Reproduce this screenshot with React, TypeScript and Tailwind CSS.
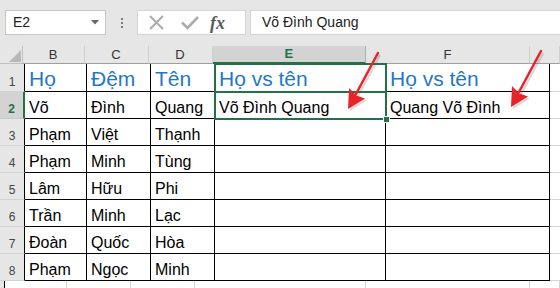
import React from 'react';

const COLS = [
  { key: 'A', w: 25 },
  { key: 'B', w: 62 },
  { key: 'C', w: 64 },
  { key: 'D', w: 64 },
  { key: 'E', w: 171 },
  { key: 'F', w: 164 },
  { key: 'G', w: 30 },
];

const HEAD = ['Họ', 'Đệm', 'Tên', 'Họ vs tên', 'Họ vs tên'];

const ROWS: string[][] = [
  ['Võ', 'Đình', 'Quang', 'Võ Đình Quang', 'Quang Võ Đình'],
  ['Phạm', 'Việt', 'Thạnh', '', ''],
  ['Phạm', 'Minh', 'Tùng', '', ''],
  ['Lâm', 'Hữu', 'Phi', '', ''],
  ['Trần', 'Minh', 'Lạc', '', ''],
  ['Đoàn', 'Quốc', 'Hòa', '', ''],
  ['Phạm', 'Ngọc', 'Minh', '', ''],
];

function Arrow({ dx, dy }: { dx: number; dy: number }) {
  // tail (378,53) -> tip (348,109)
  return (
    <g transform={`translate(${dx} ${dy})`}>
      <g transform="translate(2 2)" opacity="0.22">
        <line x1="378" y1="53" x2="356" y2="94" stroke="#555" strokeWidth="2.5" />
        <polygon points="348,109 365,98.5 356.5,95.5 349,88" fill="#555" />
      </g>
      <line x1="378" y1="53" x2="356" y2="94" stroke="#e8232a" strokeWidth="2.5" strokeLinecap="round" />
      <polygon points="348,109 365,98.5 356.5,95.5 349,88" fill="#e8232a" />
    </g>
  );
}

function Toolbar() {
  return (
    <div className="flex h-[46px] items-start bg-[#e6e6e6] pl-[5px] pt-[10px]">
      <div className="flex h-[25px] w-[101px] items-center justify-between border border-[#c6c6c6] bg-white pl-[7px] pr-[6px] text-[14px] text-[#222]">
        <span>E2</span>
        <svg width="8" height="5" viewBox="0 0 8 5">
          <polygon points="0,0 8,0 4,4.5" fill="#666" />
        </svg>
      </div>
      <div className="flex h-[25px] w-[31px] flex-col items-center justify-center gap-[2px]">
        <span className="h-[2px] w-[2px] bg-[#7a7a7a]" />
        <span className="h-[2px] w-[2px] bg-[#7a7a7a]" />
        <span className="h-[2px] w-[2px] bg-[#7a7a7a]" />
      </div>
      <div className="flex h-[25px] w-[109px] items-center border border-[#d4d4d4] bg-white">
        <svg width="15" height="15" viewBox="0 0 15 15" className="ml-[11px]">
          <path d="M1 1 L14 14 M14 1 L1 14" stroke="#ababab" strokeWidth="2" />
        </svg>
        <svg width="18" height="15" viewBox="0 0 18 15" className="ml-[17px]">
          <path d="M1 7.5 L6.5 13 L17 2" stroke="#ababab" strokeWidth="2.6" fill="none" />
        </svg>
        <span className="ml-[11px] font-['Liberation_Serif'] text-[18px] font-bold italic leading-none text-[#5a5a5a]">
          fx
        </span>
      </div>
      <div className="ml-[4px] flex h-[25px] flex-1 items-center border border-r-0 border-[#d4d4d4] bg-white pl-[11px] text-[14px] text-[#222]">
        Võ Đình Quang
      </div>
    </div>
  );
}

function HeaderRow() {
  return (
    <div className="flex h-[18px]">
      <div className="relative box-border w-[25px] border-r border-b border-[#c0c0c0] bg-[#e6e6e6]">
        <svg width="25" height="18" viewBox="0 0 25 18" className="absolute left-0 top-0">
          <polygon points="9,16 21,16 21,4" fill="#b8b8b8" />
        </svg>
      </div>
      {COLS.slice(1).map((c) =>
        c.key === 'E' ? (
          <div
            key={c.key}
            style={{ width: c.w }}
            className="box-border flex items-center justify-center border-b-2 border-r border-b-[#217346] border-r-[#b0b0b0] bg-[#d3d3d3] text-[13px] font-bold text-[#217346]"
          >
            {c.key}
          </div>
        ) : (
          <div
            key={c.key}
            style={{ width: c.w }}
            className="box-border flex shrink-0 items-center justify-center border-r border-b border-r-[#cfcfcf] border-b-[#9e9e9e] bg-[#e6e6e6] text-[13px] text-[#333]"
          >
            {c.key === 'G' ? '' : c.key}
          </div>
        )
      )}
    </div>
  );
}

function Row({ n, cells, head }: { n: number; cells: string[]; head?: boolean }) {
  const sel = n === 2;
  return (
    <div className={`flex ${n === 1 ? 'h-[28px]' : 'h-[27px]'}`}>
      <div
        className={`box-border flex w-[25px] shrink-0 items-end justify-center border-b pb-[3px] text-[12px] leading-none ${
          sel
            ? 'border-r-2 border-b-[#c8c8c8] border-r-[#217346] bg-[#d3d3d3] font-bold text-[#217346]'
            : 'border-r border-b-[#d2d2d2] border-r-black bg-[#e6e6e6] text-[#444]'
        }`}
      >
        {n}
      </div>
      {cells.map((t, i) => (
        <div
          key={i}
          style={{ width: COLS[i + 1].w }}
          className={`box-border flex shrink-0 items-end overflow-visible whitespace-nowrap border-r border-b border-black pl-[4px] leading-none ${
            head ? 'pb-[2px] text-[21px] text-[#1f78c8]' : 'pb-[2px] text-[16px] text-black'
          }`}
        >
          {t}
        </div>
      ))}
      <div className="box-border w-[30px] shrink-0 border-b border-[#d4d4d4]" />
    </div>
  );
}

export default function App() {
  return (
    <div className="relative h-[288px] w-[560px] overflow-hidden bg-white font-['Liberation_Sans',Arial,sans-serif]">
      <Toolbar />
      <HeaderRow />
      <Row n={1} cells={HEAD} head />
      {ROWS.map((r, i) => (
        <Row key={i} n={i + 2} cells={r} />
      ))}
      <div className="flex h-[27px]">
        <div className="box-border w-[25px] border-r border-black bg-[#e6e6e6]" />
        {COLS.slice(1).map((c) => (
          <div key={c.key} style={{ width: c.w }} className="box-border shrink-0 border-r border-[#d4d4d4]" />
        ))}
      </div>

      {/* selection E1:E2 */}
      <div className="absolute left-[214px] top-[63px] h-[30px] w-[173px] border-2 border-[#217346]" />
      <div className="absolute left-[214px] top-[91px] h-[29px] w-[173px] border-2 border-[#217346]" />
      <div className="absolute left-[383px] top-[116px] h-[7px] w-[7px] border border-white bg-[#217346]" />

      <svg className="pointer-events-none absolute left-0 top-0" width="560" height="288" viewBox="0 0 560 288">
        <Arrow dx={0} dy={0} />
        <Arrow dx={163} dy={-2} />
      </svg>
    </div>
  );
}
